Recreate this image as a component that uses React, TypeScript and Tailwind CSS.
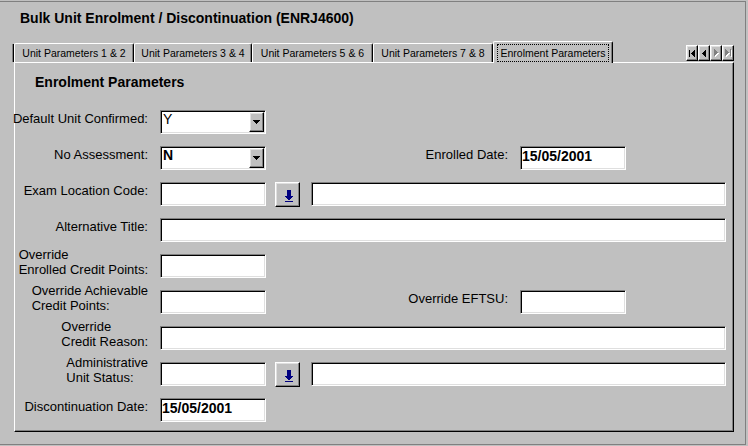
import type { ReactNode } from "react";

const sunken =
  "bg-white border border-t-[#808080] border-l-[#808080] border-b-white border-r-white shadow-[inset_1px_1px_0_#000,inset_-1px_-1px_0_#dfdfdf]";
const raised =
  "bg-[#c0c0c0] border border-t-white border-l-white border-b-black border-r-black shadow-[inset_-1px_-1px_0_#808080,inset_1px_1px_0_#dfdfdf]";

function TextBox({ value, wide }: { value?: string; wide?: boolean }) {
  return (
    <div
      className={`${sunken} ${wide ? "flex-1" : "w-[106px]"} h-[24px] shrink-0 pl-[1px] pt-[1px] text-[14px] font-bold leading-[16px]`}
    >
      {value}
    </div>
  );
}

function Select({ value, bold }: { value: string; bold?: boolean }) {
  return (
    <div className={`${sunken} flex h-[24px] w-[106px] shrink-0 p-[1px]`}>
      <div className={`flex-1 pl-[1px] pt-[1px] text-[14px] leading-[12px] ${bold ? "font-bold" : ""}`}>{value}</div>
      <div className={`${raised} flex h-full w-[15px] items-center justify-center`}>
        <svg width="7" height="4" viewBox="0 0 7 4">
          <rect x="0" y="0" width="7" height="1" fill="#000" />
          <rect x="1" y="1" width="5" height="1" fill="#000" />
          <rect x="2" y="2" width="3" height="1" fill="#000" />
          <rect x="3" y="3" width="1" height="1" fill="#000" />
        </svg>
      </div>
    </div>
  );
}

function LookupButton() {
  return (
    <div className={`${raised} ml-[9px] h-[25px] w-[25px] shrink-0 self-start pl-[9px] pt-[7px]`}>
      <svg width="8" height="12" viewBox="0 0 8 12" className="block">
        <rect x="2" y="0" width="4" height="6" fill="#000080" />
        <rect x="0" y="6" width="8" height="1" fill="#000080" />
        <rect x="1" y="7" width="6" height="1" fill="#000080" />
        <rect x="2" y="8" width="4" height="1" fill="#000080" />
        <rect x="3" y="9" width="2" height="1" fill="#000080" />
        <rect x="0" y="11" width="8" height="1" fill="#000080" />
      </svg>
    </div>
  );
}

function Row({ label, children }: { label: ReactNode; children: ReactNode }) {
  return (
    <div className="flex h-[24px] items-center">
      <div className="mb-[8px] flex w-[133px] shrink-0 justify-end">
        <div className="whitespace-nowrap text-left leading-[15px]">{label}</div>
      </div>
      <div className="ml-[12px] flex flex-1 items-center self-stretch">{children}</div>
    </div>
  );
}

function RightLabel({ children }: { children: ReactNode }) {
  return <div className="mb-[8px] w-[242px] shrink-0 text-right leading-[15px]">{children}</div>;
}

function NavButton({ children }: { children: ReactNode }) {
  return <div className={`${raised} flex h-[16px] w-[12px] items-center justify-center`}>{children}</div>;
}

function Tab({ label, width }: { label: string; width: string }) {
  return (
    <div
      className={`${width} flex h-[19px] shrink-0 items-center justify-center whitespace-nowrap rounded-t-[2px] border-t border-l border-white border-r border-r-black text-[10.5px] leading-[13px] shadow-[inset_-1px_0_0_#808080]`}
    >
      {label}
    </div>
  );
}

export default function App() {
  return (
    <div className="h-[446px] w-[748px] overflow-hidden bg-[#c0c0c0] font-['Liberation_Sans',Arial,sans-serif] text-[13px] text-black">
      <div className="mt-[1px] h-[444px] w-[746px] border-t border-r border-b border-[#808080]">
        <div className="pl-[20px] pt-[8px] text-[14px] font-bold leading-[16px]">
          Bulk Unit Enrolment / Discontinuation (ENRJ4600)
        </div>

        {/* tab strip */}
        <div className="ml-[11px] mt-[15px] flex h-[21px] w-[723px] items-end">
          <div className="h-[18px] w-[3px] shrink-0 border-r border-black shadow-[inset_-1px_0_0_#808080]" />
          <Tab label="Unit Parameters 1 & 2" width="w-[120px]" />
          <Tab label="Unit Parameters 3 & 4" width="w-[118px]" />
          <Tab label="Unit Parameters 5 & 6" width="w-[121px]" />
          <Tab label="Unit Parameters 7 & 8" width="w-[120px]" />
          <div className="relative z-10 -mb-[1px] flex h-[22px] w-[120px] shrink-0 rounded-t-[2px] border-t border-l border-white border-r border-r-black bg-[#c0c0c0] px-[3px] pt-[2px] pb-[1px] shadow-[inset_-1px_0_0_#808080]">
            <div className="flex flex-1 items-center justify-center whitespace-nowrap border border-dotted border-black text-[10.5px] leading-[13px]">
              Enrolment Parameters
            </div>
          </div>
          <div className="mb-[1px] ml-auto flex">
            <NavButton>
              <svg width="6" height="7" viewBox="0 0 6 7">
                <rect x="0" y="0" width="1" height="7" fill="#000" />
                <rect x="2" y="3" width="1" height="1" fill="#000" />
                <rect x="3" y="2" width="1" height="3" fill="#000" />
                <rect x="4" y="1" width="1" height="5" fill="#000" />
                <rect x="5" y="0" width="1" height="7" fill="#000" />
              </svg>
            </NavButton>
            <NavButton>
              <svg width="4" height="7" viewBox="0 0 4 7">
                <rect x="0" y="3" width="1" height="1" fill="#000" />
                <rect x="1" y="2" width="1" height="3" fill="#000" />
                <rect x="2" y="1" width="1" height="5" fill="#000" />
                <rect x="3" y="0" width="1" height="7" fill="#000" />
              </svg>
            </NavButton>
            <NavButton>
              <svg width="5" height="8" viewBox="0 0 5 8">
                <g fill="#fff" transform="translate(1 1)">
                  <rect x="0" y="0" width="1" height="7" />
                  <rect x="1" y="1" width="1" height="5" />
                  <rect x="2" y="2" width="1" height="3" />
                  <rect x="3" y="3" width="1" height="1" />
                </g>
                <g fill="#808080">
                  <rect x="0" y="0" width="1" height="7" />
                  <rect x="1" y="1" width="1" height="5" />
                  <rect x="2" y="2" width="1" height="3" />
                  <rect x="3" y="3" width="1" height="1" />
                </g>
              </svg>
            </NavButton>
            <NavButton>
              <svg width="7" height="8" viewBox="0 0 7 8">
                <g fill="#fff" transform="translate(1 1)">
                  <rect x="0" y="0" width="1" height="7" />
                  <rect x="1" y="1" width="1" height="5" />
                  <rect x="2" y="2" width="1" height="3" />
                  <rect x="3" y="3" width="1" height="1" />
                  <rect x="5" y="0" width="1" height="7" />
                </g>
                <g fill="#808080">
                  <rect x="0" y="0" width="1" height="7" />
                  <rect x="1" y="1" width="1" height="5" />
                  <rect x="2" y="2" width="1" height="3" />
                  <rect x="3" y="3" width="1" height="1" />
                  <rect x="5" y="0" width="1" height="7" />
                </g>
              </svg>
            </NavButton>
          </div>
        </div>

        {/* tab panel */}
        <div className="ml-[14px] h-[370px] w-[720px] border-t border-l border-white border-r border-b border-r-black border-b-black pr-[7px] pt-[11px] shadow-[inset_-1px_-1px_0_#808080]">
          <div className="pl-[20px] text-[14px] font-bold leading-[16px]">Enrolment Parameters</div>

          <div className="mt-[20px] flex flex-col gap-[12px]">
            <Row label="Default Unit Confirmed:">
              <Select value="Y" />
            </Row>
            <Row label="No Assessment:">
              <Select value="N" bold />
              <RightLabel>Enrolled Date:</RightLabel>
              <div className="ml-[12px]">
                <TextBox value="15/05/2001" />
              </div>
            </Row>
            <Row label="Exam Location Code:">
              <TextBox />
              <LookupButton />
              <div className="ml-[11px] flex flex-1 self-stretch">
                <TextBox wide />
              </div>
            </Row>
            <Row label="Alternative Title:">
              <TextBox wide />
            </Row>
            <Row
              label={
                <>
                  Override
                  <br />
                  Enrolled Credit Points:
                </>
              }
            >
              <TextBox />
            </Row>
            <Row
              label={
                <>
                  Override Achievable
                  <br />
                  Credit Points:
                </>
              }
            >
              <TextBox />
              <RightLabel>Override EFTSU:</RightLabel>
              <div className="ml-[12px]">
                <TextBox />
              </div>
            </Row>
            <Row
              label={
                <>
                  Override
                  <br />
                  Credit Reason:
                </>
              }
            >
              <TextBox wide />
            </Row>
            <Row
              label={
                <>
                  Administrative
                  <br />
                  Unit Status:
                </>
              }
            >
              <TextBox />
              <LookupButton />
              <div className="ml-[11px] flex flex-1 self-stretch">
                <TextBox wide />
              </div>
            </Row>
            <Row label="Discontinuation Date:">
              <TextBox value="15/05/2001" />
            </Row>
          </div>
        </div>
      </div>
    </div>
  );
}
